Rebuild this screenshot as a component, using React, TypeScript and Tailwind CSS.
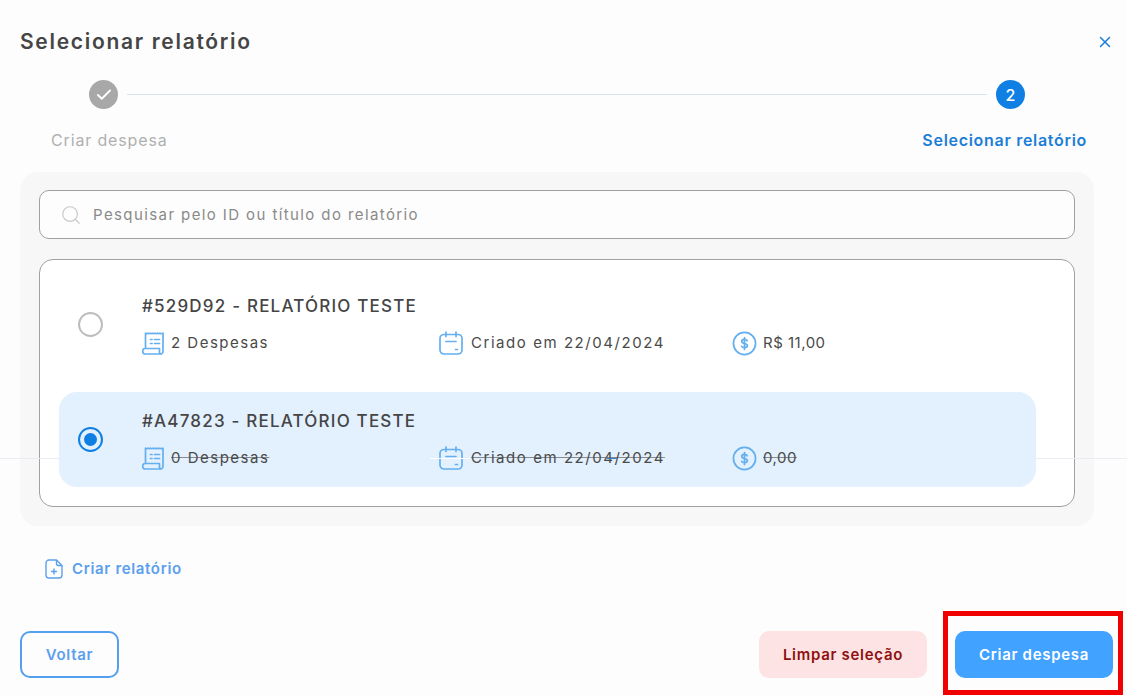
import type { ReactNode } from 'react';
import { Check, Search, X } from 'lucide-react';

const ReceiptIcon = () => (
  <svg width="24" height="24" viewBox="0 0 24 24" fill="none" stroke="#64aff0" strokeWidth="1.7" strokeLinecap="round" strokeLinejoin="round">
    <path d="M3.5 17.5V2.2c1 .7 1.500.7 2.400 0 .9.7 1.500.7 2.400 0 .9.7 1.500.7 2.400 0 .9.7 1.500.7 2.400 0 .9.7 1.500.7 2.400 0 .9.7 1.500.7 2.400 0 .9.7 1.500.7 3.100 0V20.500a2.500 2.500 0 0 1-2.500 2.500H3a2.200 2.200 0 0 1-2.200-2.200v-1.100A2.200 2.200 0 0 1 3 17.500h14.500v3a2 2 0 0 0 2 2.500" />
    <path d="M8.500 8.500h1.500M12.500 8.500h5M8.500 12.500h1.500M12.500 12.500h5" />
  </svg>
);

const CalendarIcon = () => (
  <svg width="24" height="24" viewBox="0 0 24 24" fill="none" stroke="#64aff0" strokeWidth="1.7" strokeLinecap="round" strokeLinejoin="round">
    <rect x="1" y="3.500" width="22" height="19.500" rx="4" />
    <path d="M7 1v4.500M17 1v4.500M7 10.500h10M16.500 18.500h2" />
  </svg>
);

const MoneyIcon = () => (
  <svg width="25" height="25" viewBox="0 0 26 26" fill="none" stroke="#64aff0" strokeWidth="1.8" strokeLinecap="round" strokeLinejoin="round">
    <circle cx="13" cy="13" r="11.500" />
    <path d="M15.800 10.200c-.4-1-1.400-1.500-2.800-1.500-1.600 0-2.800.8-2.800 2.100 0 2.900 5.800 1.500 5.800 4.400 0 1.300-1.200 2.200-3 2.200-1.400 0-2.500-.5-2.900-1.500M13 6.800v12.400" />
  </svg>
);

const Meta = ({ icon, text, box, tracking, struck }: { icon: ReactNode; text: string; box: string; tracking: string; struck: boolean }) => (
  <div className={`flex items-center ${box}`}>
    {icon}
    <span className={`text-[15px] text-[#4a4a4a] ${tracking} ${struck ? 'line-through decoration-[#4a4a4a]/60' : ''}`}>{text}</span>
  </div>
);

const reports = [
  { id: '#529D92', count: '2 Despesas', date: 'Criado em 22/04/2024', value: 'R$ 11,00', selected: false },
  { id: '#A47823', count: '0 Despesas', date: 'Criado em 22/04/2024', value: '0,00', selected: true },
];

export default function App() {
  return (
    <div className="relative h-[696px] w-[1127px] overflow-hidden bg-[#fdfdfd] px-5 font-['Inter','Liberation_Sans',sans-serif]">
      <div className="flex h-[80px] items-center justify-between pt-1">
        <h1 className="text-[21px] font-semibold tracking-[1.7px] text-[#454545]">Selecionar relatório</h1>
        <X size={18} strokeWidth={2} className="mr-[-7px] text-[#1c7ed6]" />
      </div>

      <div className="flex items-center pl-[69px] pr-[82px]">
        <div className="flex h-[29px] w-[29px] items-center justify-center rounded-full bg-[#a8a8a8]">
          <Check size={18} strokeWidth={2.5} className="text-white" />
        </div>
        <div className="mx-[9px] h-px flex-1 bg-[#d8e3f0]" />
        <div className="flex h-[29px] w-[29px] items-center justify-center rounded-full bg-[#0f7fe3] text-[16px] font-medium text-white">2</div>
      </div>

      <div className="mt-[20px] flex h-[22px] items-center justify-between pl-[31px] pr-[20px]">
        <span className="text-[16px] tracking-[0.85px] text-[#b0b0b0]">Criar despesa</span>
        <span className="text-[16px] font-semibold tracking-[0.7px] text-[#1c7ed6]">Selecionar relatório</span>
      </div>

      <div className="mt-[21px] w-[1074px] rounded-[18px] bg-[#f7f7f7] px-[19px] pb-[19px] pt-[18px]">
        <div className="flex h-[49px] items-center rounded-[10px] border border-[#a0a0a0] bg-[#fdfdfd] pl-[20px]">
          <Search size={22} strokeWidth={1.25} className="text-[#c8c8c8]" />
          <span className="ml-[11px] pt-[2px] text-[15px] tracking-[1.4px] text-[#8a8a8a]">Pesquisar pelo ID ou título do relatório</span>
        </div>

        <div className="mt-5 flex h-[248px] flex-col gap-5 rounded-[14px] border border-[#a0a0a0] bg-white pb-[19px] pl-[19px] pr-[38px] pt-[17px]">
          {reports.map((r) => (
            <div key={r.id} className={`relative z-10 flex h-[95px] items-center rounded-[18px] pl-[19px] ${r.selected ? 'bg-[#e3f0fd]' : ''}`}>
              {r.selected ? (
                <div className="flex h-[25px] w-[25px] items-center justify-center rounded-full border-[2.5px] border-[#0f7fe3]">
                  <div className="h-[13px] w-[13px] rounded-full bg-[#0f7fe3]" />
                </div>
              ) : (
                <div className="h-[25px] w-[25px] rounded-full border-2 border-[#bdbdbd]" />
              )}
              <div className="ml-[39px] pt-px">
                <div className="text-[17px] font-medium tracking-[1.2px] text-[#454545]">{r.id} - RELATÓRIO TESTE</div>
                <div className="mt-[11px] flex">
                  <Meta icon={<ReceiptIcon />} text={r.count} box="w-[297px] gap-[5px]" tracking="tracking-[1.5px]" struck={r.selected} />
                  <Meta icon={<CalendarIcon />} text={r.date} box="w-[293px] gap-2" tracking="tracking-[1.55px]" struck={r.selected} />
                  <Meta icon={<MoneyIcon />} text={r.value} box="w-[200px] gap-[6px]" tracking="tracking-[0.5px]" struck={r.selected} />
                </div>
              </div>
            </div>
          ))}
        </div>
      </div>

      <div className="mt-[32px] flex h-[22px] items-center gap-[9px] pl-[25px] text-[15px] font-semibold tracking-[0.66px] text-[#5aa0ee]">
        <svg width="18" height="20" viewBox="0 0 18 20" fill="none" stroke="#5aa0ee" strokeWidth="1.4" strokeLinecap="round" strokeLinejoin="round">
          <path d="M11.500 1H4a3 3 0 0 0-3 3v12a3 3 0 0 0 3 3h10a3 3 0 0 0 3-3V6.500zM11.500 1v3.500a2 2 0 0 0 2 2H17M9 10v5M6.500 12.500h5" />
        </svg>
        Criar relatório
      </div>

      <div className="mr-[-6px] mt-[51px] flex items-center justify-between">
        <button className="h-[47px] w-[99px] rounded-[10px] border-2 border-[#55a0ee] pt-px text-[15px] font-semibold tracking-[0.7px] text-[#5aa0ee]">Voltar</button>
        <div className="flex items-center gap-7">
          <button className="h-[47px] w-[168px] rounded-[10px] bg-[#fde3e3] pt-px text-[15px] font-semibold tracking-[0.7px] text-[#8f1010]">Limpar seleção</button>
          <button className="h-[47px] w-[158px] rounded-[10px] bg-[#42a2ff] pt-px text-[15px] font-semibold tracking-[0.7px] text-white">Criar despesa</button>
        </div>
      </div>

      {/* faint rule that crosses the whole frame, with the leftovers on the selected row */}
      <div className="pointer-events-none absolute left-0 top-[458px] h-px w-full bg-[#e8edf3]" />
      <div className="pointer-events-none absolute left-[430px] top-[458px] z-20 h-px w-[40px] bg-white" />
      <div className="pointer-events-none absolute left-[607px] top-[458px] z-20 h-px w-[10px] bg-[#3b82c4]" />
      <div className="pointer-events-none absolute left-[943px] top-[611px] z-20 h-[84px] w-[180px] border-[5px] border-[#f00000]" />
    </div>
  );
}
